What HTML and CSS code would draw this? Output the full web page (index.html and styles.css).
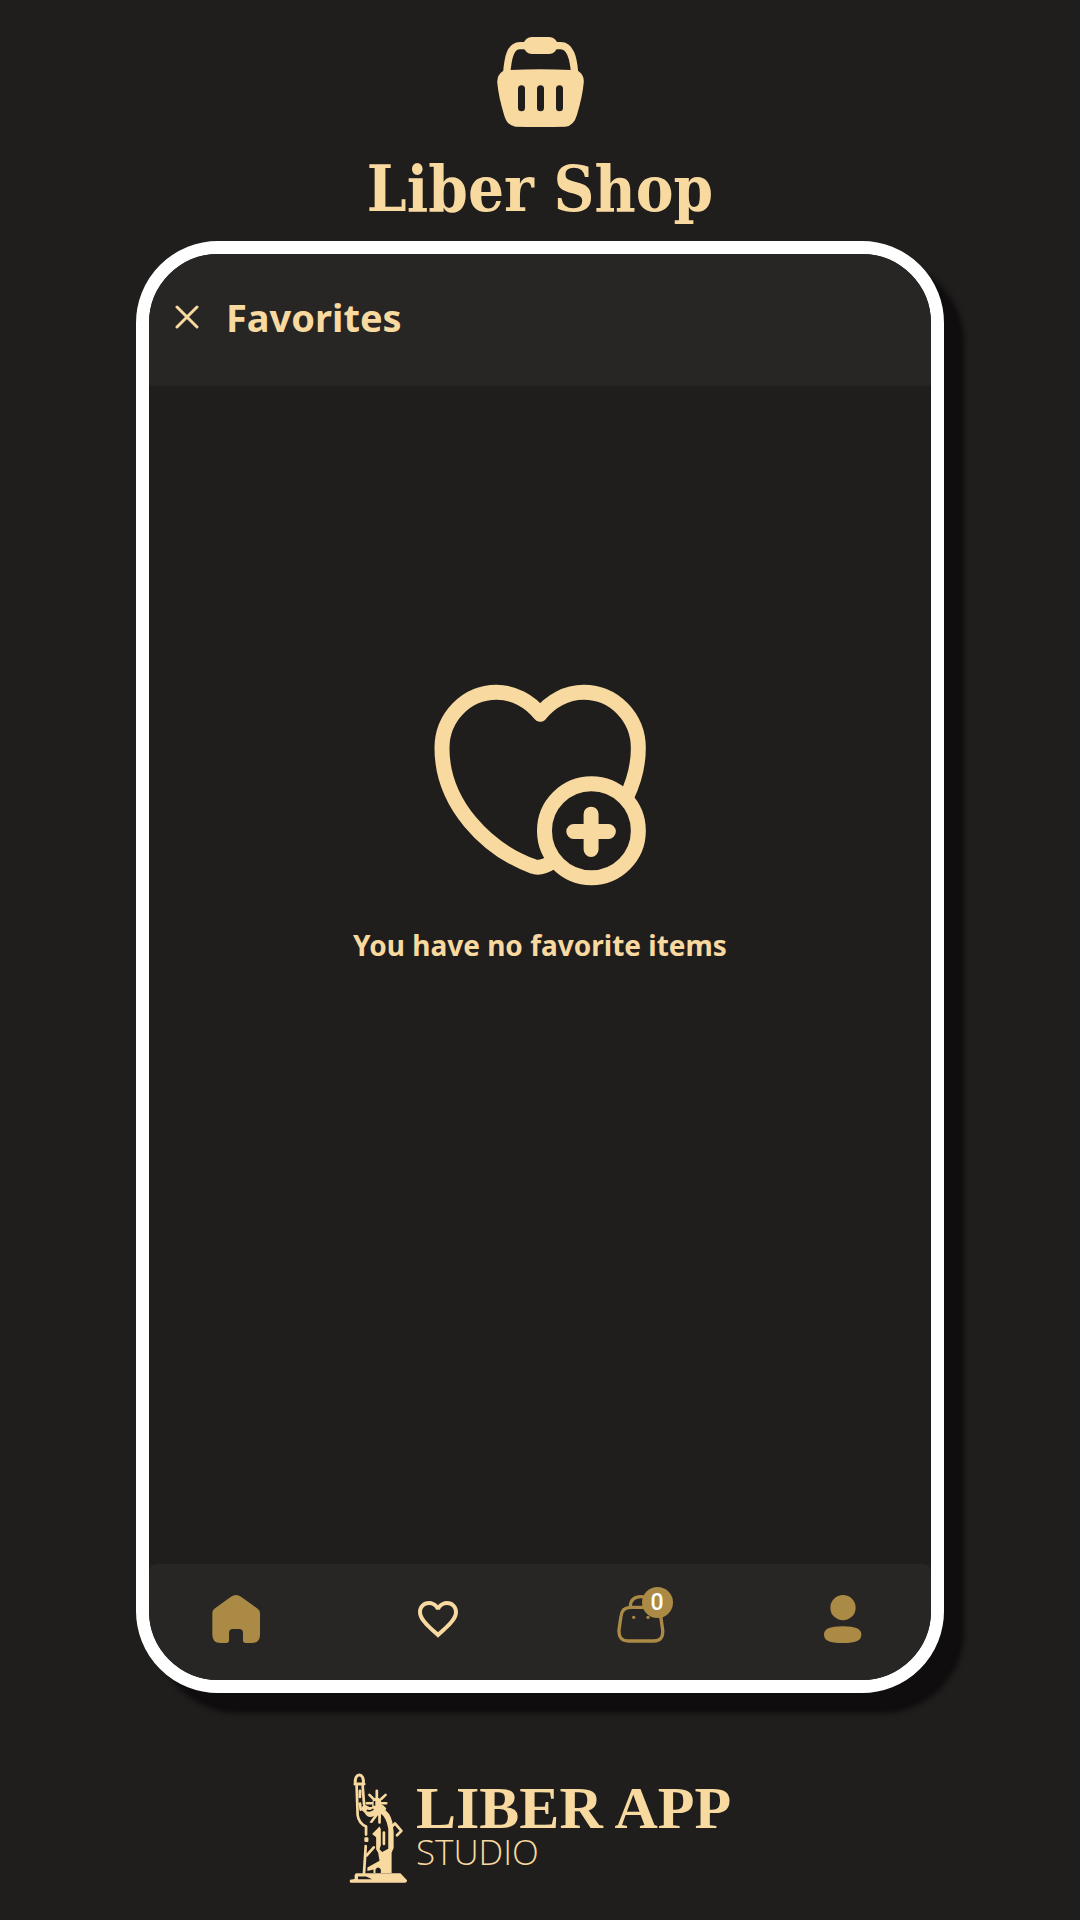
FILE: index.html
```html
<!DOCTYPE html>
<html lang="en">
<head>
<meta charset="utf-8">
<meta name="viewport" content="width=device-width, initial-scale=1">
<title>Liber Shop – Favorites</title>
<link rel="stylesheet" href="styles.css">
</head>
<body>
<header class="brand">
  <svg class="brand-icon" viewBox="441 51 261 270" aria-hidden="true">
    <path d="M470 160C474 110 482 77 510 77H632C660 77 670 110 674 160" fill="none" stroke="currentColor" stroke-width="22"/>
    <path d="M518 75Q526 51 546 51H597Q617 51 625 75Q617 102 597 102H546Q526 102 518 75Z" fill="currentColor"/>
    <path fill-rule="evenodd" fill="currentColor" d="M480 150Q571 146 663 150L686 154Q704 166 701 190Q697 232 681 284Q672 317 646 320Q571 322 496 320Q471 317 462 284Q446 232 442 190Q440 166 458 154ZM504 206V263A10 10 0 0 0 525 263V206A10 10 0 0 0 504 206ZM561 206V263A10 10 0 0 0 582 263V206A10 10 0 0 0 561 206ZM618 206V263A10 10 0 0 0 639 263V206A10 10 0 0 0 618 206Z"/>
  </svg>
  <h1 class="brand-name">Liber Shop</h1>
</header>

<div class="phone">
  <header class="app-bar">
    <button class="close" type="button" aria-label="Close">
      <svg viewBox="0 0 24 24" aria-hidden="true"><path d="M2 2L22 22M22 2L2 22" fill="none" stroke="currentColor" stroke-width="3" stroke-linecap="round"/></svg>
    </button>
    <h2 class="app-title">Favorites</h2>
  </header>

  <main class="empty">
    <svg class="empty-icon" viewBox="42 40 637 605" aria-hidden="true">
      <g fill="none" stroke="currentColor" stroke-width="45" stroke-linecap="round" stroke-linejoin="round">
        <path d="M398 573Q362 596 340 587C200 536 66 400 66 232C66 140 138 64 230 64C282 64 330 90 361 130C392 90 440 64 492 64C584 64 656 140 656 232C656 284 643 332 620 380" stroke-linecap="butt"/>
        <circle cx="515" cy="480" r="141"/>
        <path d="M462 482H566M514 430V536"/>
      </g>
    </svg>
    <p class="empty-text">You have no favorite items</p>
  </main>

  <nav class="tabs" aria-label="Main">
    <a class="tab" href="#home" aria-label="Home">
      <svg viewBox="246 135 144 144" aria-hidden="true"><path fill="currentColor" d="M303 140Q318 130 333 140L383 176Q390 181 390 190V254Q390 279 365 279H347Q339 279 339 271V249Q339 237 327 237H309Q297 237 297 249V271Q297 279 289 279H271Q247 279 247 254V190Q247 181 253 176Z"/></svg>
    </a>
    <a class="tab tab-active" href="#favorites" aria-label="Favorites" aria-current="page">
      <svg viewBox="0 0 24 24" aria-hidden="true"><path fill="currentColor" d="M16.5 3c-1.74 0-3.41.81-4.5 2.09C10.91 3.81 9.24 3 7.5 3 4.42 3 2 5.42 2 8.5c0 3.78 3.4 6.86 8.55 11.54L12 21.35l1.45-1.32C18.6 15.36 22 12.28 22 8.5 22 5.42 19.58 3 16.5 3zm-4.4 15.55l-.1.1-.1-.1C7.14 14.24 4 11.39 4 8.5 4 6.5 5.5 5 7.5 5c1.54 0 3.04.99 3.57 2.36h1.87C13.46 5.99 14.96 5 16.5 5c2 0 3.5 1.5 3.5 3.5 0 2.89-3.14 5.74-7.9 10.05z"/></svg>
    </a>
    <a class="tab" href="#cart" aria-label="Cart">
      <svg viewBox="110 135 144 144" aria-hidden="true">
        <path d="M151 172H214Q238 172 241 198L247 240Q250 273 220 273H145Q114 273 116 240L122 198Q125 172 151 172ZM150 168C151 150 163 140 182 140C201 140 213 150 214 168" fill="none" stroke="currentColor" stroke-width="10"/>
        <circle cx="160" cy="202" r="5" fill="currentColor"/>
        <circle cx="203" cy="202" r="5" fill="currentColor"/>
      </svg>
      <span class="badge">0</span>
    </a>
    <a class="tab" href="#profile" aria-label="Profile">
      <svg viewBox="716 135 144 144" aria-hidden="true">
        <circle cx="788" cy="173" r="38" fill="currentColor"/>
        <path fill="currentColor" d="M731 254C731 237 747 229 787 229S843 237 843 254S827 279 787 279S731 271 731 254Z"/>
      </svg>
    </a>
  </nav>
</div>

<footer class="studio">
  <svg class="studio-icon" viewBox="32 25 174 327" aria-hidden="true">
    <g fill="none" stroke="currentColor" stroke-width="8" stroke-linecap="round" stroke-linejoin="round">
      <!-- torch and raised arm -->
      <path d="M50 54C49 40 54 31 62 31S75 40 74 54" stroke-width="9"/>
      <path d="M49 58H76" stroke-width="9"/>
      <path d="M54 64L57 150Q60 174 82 184V208M72 64L76 118M64 78V96M64 116L66 134"/>
      <!-- crown -->
      <path d="M114 78V98M92 90L104 102M140 90L127 102M84 115H100M128 115H142M130 124L138 131"/>
      <!-- robe -->
      <path d="M81 242L76 322M105 246L84 270M122 142V172"/>
      <path d="M158 185L168 175L187 197L174 210"/>
    </g>
    <g fill="currentColor">
      <path d="M102 104Q114 92 126 104L130 128Q154 142 160 170L164 200V248L158 262V322H126V312Q118 300 110 312V322H104V312L86 316V306L122 286L118 262L112 252V216L100 206L122 184L126 192V240L122 252L130 260L148 250V190Q142 156 126 146V160L118 150L100 174L92 172L106 152Q88 162 78 144L66 132L76 118L92 126L100 126Z"/>
      <rect x="77" y="216" width="12" height="14" rx="3"/>
      <rect x="131" y="198" width="8" height="42" rx="4"/>
      <path fill-rule="evenodd" d="M52 323H184L204 344Q204 351 198 351H36Q32 350 34 342L48 340V328ZM58 333V341H100L82 333Z"/>
    </g>
    <g fill="none" stroke="#1f1e1c" stroke-width="5">
      <path d="M62 42V50M107 108V122M84 136Q96 140 104 132"/>
    </g>
  </svg>
  <p class="studio-text">
    <span class="studio-name">LIBER APP</span>
    <span class="studio-sub">STUDIO</span>
  </p>
</footer>
</body>
</html>
```
FILE: styles.css
```css
:root {
  --page: #1f1e1c;
  --surface: #272625;
  --cream: #f8d9a0;
  --gold: #ab8a45;
  --shadow: #0f0d0e;
}

* {
  box-sizing: border-box;
  margin: 0;
}

body {
  display: flex;
  flex-direction: column;
  min-height: 100vh;
  padding: 37px 136px;
  background: var(--page);
  color: var(--cream);
  font-family: "Noto Sans", sans-serif;
}

svg {
  display: block;
}

.brand {
  display: flex;
  flex-direction: column;
  align-items: center;
  gap: 22px;
  padding-bottom: 12px;
}

.brand-icon {
  width: 87px;
  height: 90px;
}

.brand-name {
  font: bold 63px/80px "DejaVu Serif Condensed", "DejaVu Serif", serif;
  white-space: nowrap;
}

.phone {
  display: flex;
  flex: 1;
  flex-direction: column;
  overflow: hidden;
  border: 13px solid #fff;
  border-radius: 82px;
  box-shadow: 20px 20px 5px var(--shadow);
}

.app-bar {
  display: flex;
  align-items: center;
  gap: 27px;
  min-height: 132px;
  padding: 0 26px 6px;
  background: var(--surface);
}

.close {
  width: 24px;
  height: 24px;
  padding: 0;
  border: 0;
  background: none;
  color: inherit;
}

.app-title {
  font-size: 38px;
  line-height: 48px;
}

.empty {
  display: flex;
  flex: 1;
  flex-direction: column;
  align-items: center;
  justify-content: center;
  gap: 39px;
  padding-bottom: 302px;
}

.empty-icon {
  width: 212px;
  height: 202px;
}

.empty-text {
  font-size: 28px;
  font-weight: bold;
  line-height: 40px;
}

.tabs {
  display: flex;
  align-items: center;
  justify-content: space-between;
  min-height: 116px;
  padding: 0 64px 6px 63px;
  border-radius: 8px 8px 0 0;
  background: var(--surface);
}

.tab {
  position: relative;
  width: 48px;
  height: 48px;
  color: var(--gold);
  text-decoration: none;
}

.tab-active {
  color: var(--cream);
}

.badge {
  position: absolute;
  top: -8px;
  right: -8px;
  width: 31px;
  height: 31px;
  border-radius: 50%;
  background: var(--gold);
  color: #fff;
  font: 500 23px/32px Roboto, sans-serif;
  text-align: center;
}

.studio {
  display: flex;
  align-items: center;
  justify-content: center;
  gap: 8px;
  padding-top: 80px;
}

.studio-icon {
  width: 59px;
  height: 110px;
}

.studio-text {
  display: flex;
  flex-direction: column;
  white-space: nowrap;
}

.studio-name {
  font: bold 60px/48px "Liberation Serif", serif;
}

.studio-sub {
  font: 300 35px/40px "Open Sans", sans-serif;
}
```
